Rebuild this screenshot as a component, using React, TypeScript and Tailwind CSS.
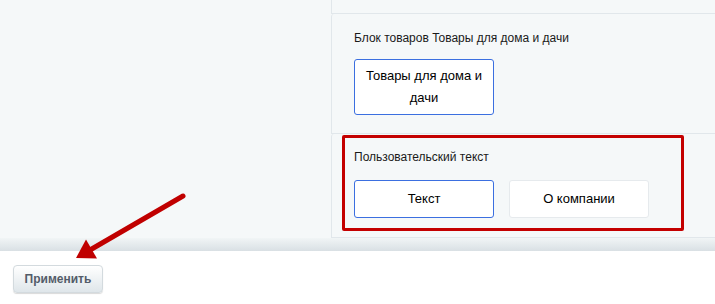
import React from "react";

export default function App() {
  const font = { fontFamily: '"Liberation Sans", Arial, sans-serif' };
  return (
    <div className="relative w-[715px] h-[304px] overflow-hidden bg-white" style={font}>
      <div className="flex h-[238px] bg-[#f5f8f9]">
        <div className="w-[331px] shrink-0" />
        <div className="flex flex-col w-[400px] shrink-0">
          <div className="h-[14px] border-l border-b border-[#e1e7eb]" />
          <div className="h-[120px] border-l border-b border-[#e1e7eb] rounded-tl-[3px] pl-[22px] pt-[16px]">
            <div className="text-[12px] leading-[16px] text-[#1a1a1a]">Блок товаров Товары для дома и дачи</div>
            <button className="mt-[13px] w-[140px] h-[56px] bg-white border border-[#3b6fe0] rounded-[3px] text-[13px] leading-[22px] text-[#000] flex items-center justify-center text-center px-2">
              Товары для дома и дачи
            </button>
          </div>
          <div className="h-[104px] border-l border-b border-[#e1e7eb] rounded-tl-[3px] pl-[22px] pt-[15px]">
            <div className="text-[12px] leading-[16px] text-[#1a1a1a]">Пользовательский текст</div>
            <div className="flex gap-[15px] mt-[15px]">
              <button className="w-[140px] h-[38px] bg-white border border-[#3b6fe0] rounded-[3px] text-[13px] text-[#000] flex items-center justify-center">
                Текст
              </button>
              <button className="w-[140px] h-[38px] bg-white border border-[#e6eaed] rounded-[3px] text-[13px] text-[#000] flex items-center justify-center">
                О компании
              </button>
            </div>
          </div>
        </div>
      </div>
      <div className="h-[13px] bg-gradient-to-b from-[#f1f5f6] to-[#d9e0e4]" />
      <div className="pl-[13px] pt-[14px]">
        <button className="w-[90px] h-[28px] rounded-[4px] border border-[#d3dade] bg-gradient-to-b from-white to-[#dfe6ea] shadow-[0_1px_1px_rgba(0,0,0,0.15)] text-[12px] font-bold text-[#535c69] flex items-center justify-center">
          Применить
        </button>
      </div>

      <div className="absolute left-[342px] top-[135px] w-[342px] h-[96px] border-[3px] border-[#c40000] rounded-[2px]" />

      <svg className="absolute left-0 top-0" width="715" height="304" viewBox="0 0 715 304">
        <line x1="183" y1="196" x2="90" y2="250" stroke="#c00000" strokeWidth="5" strokeLinecap="round" />
        <polygon points="76,258 86,239.5 97,258.5" fill="#c00000" />
      </svg>
    </div>
  );
}
